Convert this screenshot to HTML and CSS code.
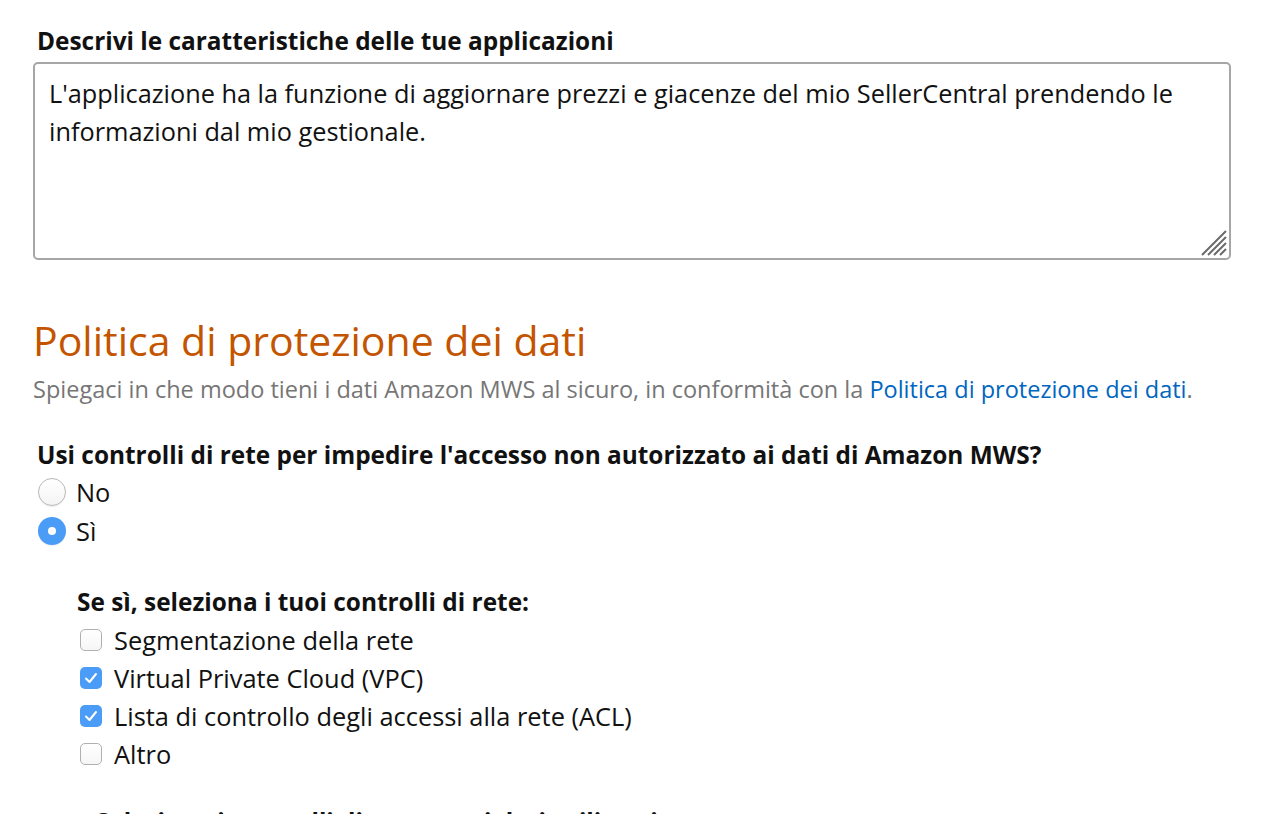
FILE: index.html
```html
<!DOCTYPE html>
<html lang="it">

<head>
    <meta charset="UTF-8">
    <meta name="viewport" content="width=device-width, initial-scale=1.0">
    <title>Politica di protezione dei dati</title>
    <link rel="stylesheet" href="styles.css">
</head>

<body>
    <div class="page">
        <div class="field">
            <div class="field-label">Descrivi le caratteristiche delle tue applicazioni</div>
            <div class="textbox">
                L'applicazione ha la funzione di aggiornare prezzi e giacenze del mio SellerCentral prendendo le
                informazioni dal mio gestionale.
                <svg class="grip" width="30" height="30" viewBox="0 0 30 30">
                    <path d="M4 28 L28 4 M10 28 L28 10 M16 28 L28 16 M22 28 L28 22" stroke="#6b6b6b" stroke-width="2" fill="none" />
                </svg>
            </div>
        </div>

        <h1 class="section-title">Politica di protezione dei dati</h1>
        <p class="section-sub">Spiegaci in che modo tieni i dati Amazon MWS al sicuro, in conformità con la <a href="#">Politica di protezione dei dati</a>.</p>

        <div class="question">
            <div class="field-label">Usi controlli di rete per impedire l'accesso non autorizzato ai dati di Amazon MWS?</div>
            <div class="option"><span class="radio"></span>No</div>
            <div class="option"><span class="radio checked"></span>Sì</div>

            <div class="sub-question">
                <div class="field-label">Se sì, seleziona i tuoi controlli di rete:</div>
                <div class="option"><span class="check"></span>Segmentazione della rete</div>
                <div class="option"><span class="check checked"><svg width="22" height="22" viewBox="0 0 22 22"><path d="M6 11.5 L9.5 15 L16 7" stroke="#fff" stroke-width="2" fill="none" stroke-linecap="round" stroke-linejoin="round" /></svg></span>Virtual Private Cloud (VPC)</div>
                <div class="option"><span class="check checked"><svg width="22" height="22" viewBox="0 0 22 22"><path d="M6 11.5 L9.5 15 L16 7" stroke="#fff" stroke-width="2" fill="none" stroke-linecap="round" stroke-linejoin="round" /></svg></span>Lista di controllo degli accessi alla rete (ACL)</div>
                <div class="option"><span class="check"></span>Altro</div>
            </div>

            <div class="sub-question next">
                <div class="field-label">Seleziona i controlli di accesso ai dati utilizzati:</div>
            </div>
        </div>
    </div>
</body>

</html>
```

FILE: styles.css
```css
body {
    font-family: 'Open Sans', Lato, sans-serif;
    color: #111;
    background-color: #fff;
    margin: 0;
    padding: 0;
    overflow: hidden;
}

.page {
    padding: 24px 55px 0 33px;
}

.field-label {
    font-weight: bold;
    font-size: 24.4px;
    line-height: 34px;
    padding-left: 4px;
}

.textbox {
    position: relative;
    height: 198px;
    box-sizing: border-box;
    margin-top: 4px;
    padding: 10px 14px 12px;
    border: 2px solid #a6a6a6;
    border-radius: 5px;
    font-size: 25.3px;
    line-height: 38px;
}

.grip {
    position: absolute;
    right: 1px;
    bottom: 1px;
}

.section-title {
    margin: 54px 0 0;
    color: #c45500;
    font-weight: normal;
    font-size: 41px;
    line-height: 52px;
}

.section-sub {
    margin: 6px 0 0;
    color: #767676;
    font-size: 23.5px;
    line-height: 34px;
}

.section-sub a {
    color: #0066c0;
    text-decoration: none;
}

.question {
    margin-top: 32px;
}

.option {
    display: flex;
    align-items: center;
    gap: 10px;
    height: 38px;
    font-size: 25.4px;
    padding-left: 5px;
}

.question > .option:nth-of-type(2) {
    height: 40px;
}

.radio {
    width: 28px;
    height: 28px;
    border-radius: 50%;
    border: 1px solid #b8b8b8;
    box-sizing: border-box;
    background: linear-gradient(#fff, #f4f4f4);
    box-shadow: 0 1px 1px rgba(0, 0, 0, 0.08);
}

.radio.checked {
    border: none;
    background: #4a9cf6;
    position: relative;
}

.radio.checked::after {
    content: "";
    position: absolute;
    left: 10px;
    top: 10px;
    width: 8px;
    height: 8px;
    border-radius: 50%;
    background: #fff;
}

.sub-question {
    margin-top: 35px;
    padding-left: 40px;
}

.sub-question .field-label {
    margin-bottom: 2px;
}

.sub-question .option {
    padding-left: 7px;
    gap: 12px;
}

.check {
    width: 22px;
    height: 22px;
    box-sizing: border-box;
    border: 1px solid #b0b0b0;
    border-radius: 5px;
    background: linear-gradient(#fff, #f6f6f6);
}

.check.checked {
    border: none;
    background: #4a9cf6;
}

.check svg {
    display: block;
}

.sub-question.next {
    margin-top: 32px;
    padding-left: 59px;
}
```
